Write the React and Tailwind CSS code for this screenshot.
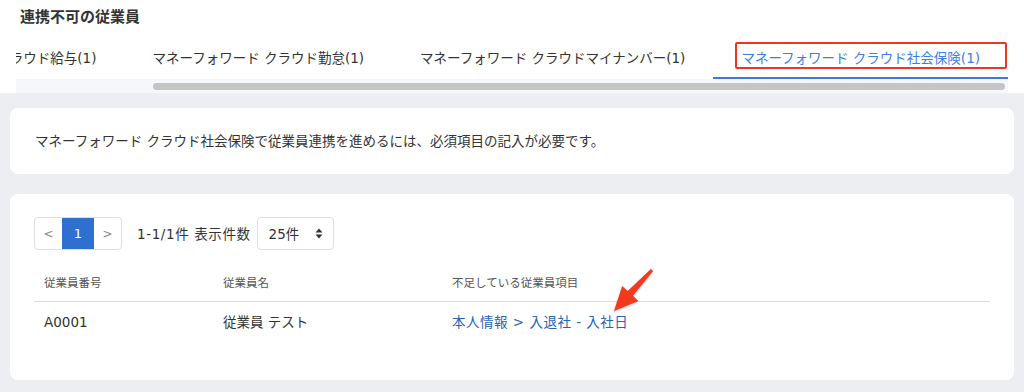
const TABS = [
  { label: 'マネーフォワード クラウド給与(1)' },
  { label: 'マネーフォワード クラウド勤怠(1)' },
  { label: 'マネーフォワード クラウドマイナンバー(1)' },
  { label: 'マネーフォワード クラウド社会保険(1)', active: true },
]

function Arrow() {
  return (
    <svg
      className="absolute left-[600px] top-[262px] drop-shadow-[0_1px_1px_rgba(0,0,0,0.25)]"
      width="60"
      height="56"
      viewBox="0 0 60 56"
    >
      <polygon
        points="50.9,7 27.7,29 22.2,23.9 14,49 38.4,38.9 32.9,33.8 53.1,9"
        fill="#f43a1c"
      />
    </svg>
  )
}

export default function App() {
  return (
    <div className="relative w-[1024px] h-[392px] overflow-hidden bg-[#edeef2] font-['DejaVu_Sans','Noto_Sans_CJK_JP',sans-serif] text-[#333]">
      {/* header + tabs */}
      <div className="bg-white h-[93px]">
        <div className="h-[39px] pl-5 pt-[8px] text-[15px] leading-[18px] font-bold text-[#333]">
          連携不可の従業員
        </div>
        <div className="mx-4 overflow-hidden">
          <div className="flex justify-end h-[40px]">
            {TABS.map((tab) => (
              <div
                key={tab.label}
                className={`relative shrink-0 px-[28px] flex items-center whitespace-nowrap text-[13.5px] leading-[18px] border-b-2 ${
                  tab.active ? 'border-[#3b7be0] text-[#3b7fe3]' : 'border-transparent text-[#333]'
                }`}
              >
                {tab.label}
                {tab.active && (
                  <span className="absolute left-[22px] right-[1px] top-[3px] bottom-[8px] border-2 border-[#ef3420] rounded-[2px]" />
                )}
              </div>
            ))}
          </div>
          {/* horizontal scrollbar */}
          <div className="h-[14px] bg-[#f5f7fb] flex items-center">
            <div className="ml-[137px] w-[852px] h-[7px] rounded-full bg-[#c4c4c4]" />
          </div>
        </div>
      </div>

      <div className="px-[10px]">
        {/* notice card */}
        <div className="mt-[15px] h-[66px] bg-white rounded-lg px-[25px] flex items-center text-[13.5px] leading-[18px] text-[#333]">
          マネーフォワード クラウド社会保険で従業員連携を進めるには、必須項目の記入が必要です。
        </div>

        {/* list card */}
        <div className="mt-[20px] h-[186px] bg-white rounded-lg pt-[23px] px-[24px]">
          <div className="flex items-center h-[33px]">
            <div className="flex h-[33px] border border-[#dcdfe4] rounded-[4px] overflow-hidden text-[12px]">
              <div className="w-[27px] flex items-center justify-center text-[#888]">&lt;</div>
              <div className="w-[32px] flex items-center justify-center bg-[#2f6fcf] text-white text-[13px]">1</div>
              <div className="w-[27px] flex items-center justify-center text-[#888]">&gt;</div>
            </div>
            <div className="ml-[15px] text-[13.5px] leading-[18px] tracking-[0.6px] text-[#333]">1-1/1件 表示件数</div>
            <div className="ml-[6px] w-[77px] h-[33px] border border-[#dcdfe4] rounded-[4px] flex items-center justify-between pl-[11px] pr-[10px] text-[13.5px] leading-[18px]">
              <span>25件</span>
              <svg width="8" height="11" viewBox="0 0 8 11">
                <polygon points="4,0.5 7.5,4.5 0.5,4.5" fill="#333" />
                <polygon points="0.5,6.5 7.5,6.5 4,10.5" fill="#333" />
              </svg>
            </div>
          </div>

          {/* table */}
          <div className="mt-[22px]">
            <div className="flex h-[30px] pt-[3px] border-b border-[#dcdcdc] text-[11.5px] leading-[16px] text-[#555]">
              <div className="w-[179px] pl-[10px]">従業員番号</div>
              <div className="w-[229px] pl-[10px]">従業員名</div>
              <div className="flex-1 pl-[10px]">不足している従業員項目</div>
            </div>
            <div className="flex h-[40px] items-center text-[13.5px] leading-[18px]">
              <div className="w-[179px] pl-[10px] text-[#333]">A0001</div>
              <div className="w-[229px] pl-[10px] text-[#333]">従業員 テスト</div>
              <div className="flex-1 pl-[10px] text-[#2563b8] tracking-[0.5px]">本人情報 &gt; 入退社 - 入社日</div>
            </div>
          </div>
        </div>
      </div>

      <Arrow />
    </div>
  )
}
